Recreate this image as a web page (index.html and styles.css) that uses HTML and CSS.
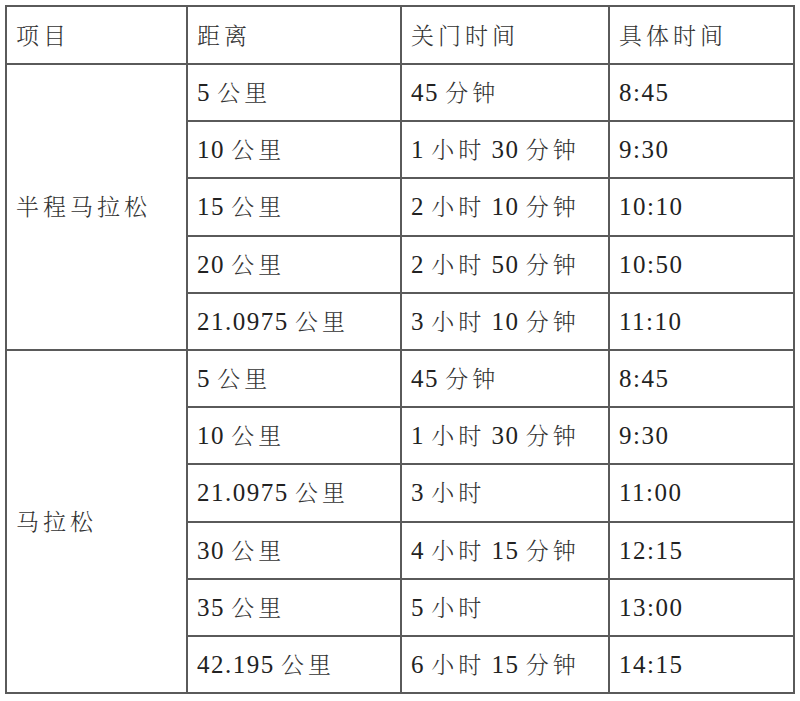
FILE: index.html
```html
<!DOCTYPE html>
<html>
<head>
<meta charset="utf-8">
<title>关门时间</title>
<link rel="stylesheet" href="styles.css">
</head>
<body>
<div class="page">
<table class="schedule">
  <colgroup>
    <col class="c1"><col class="c2"><col class="c3"><col class="c4">
  </colgroup>
  <thead>
    <tr class="head">
      <th><span class="zh">项目</span></th>
      <th><span class="zh">距离</span></th>
      <th><span class="zh">关门时间</span></th>
      <th><span class="zh">具体时间</span></th>
    </tr>
  </thead>
  <tbody>
    <tr>
      <td rowspan="5" class="event"><span class="zh">半程马拉松</span></td>
      <td><span class="num">5</span> <span class="zh">公里</span></td>
      <td><span class="num">45</span> <span class="zh">分钟</span></td>
      <td><span class="num">8:45</span></td>
    </tr>
    <tr>
      <td><span class="num">10</span> <span class="zh">公里</span></td>
      <td><span class="num">1</span> <span class="zh">小时</span> <span class="num">30</span> <span class="zh">分钟</span></td>
      <td><span class="num">9:30</span></td>
    </tr>
    <tr>
      <td><span class="num">15</span> <span class="zh">公里</span></td>
      <td><span class="num">2</span> <span class="zh">小时</span> <span class="num">10</span> <span class="zh">分钟</span></td>
      <td><span class="num">10:10</span></td>
    </tr>
    <tr>
      <td><span class="num">20</span> <span class="zh">公里</span></td>
      <td><span class="num">2</span> <span class="zh">小时</span> <span class="num">50</span> <span class="zh">分钟</span></td>
      <td><span class="num">10:50</span></td>
    </tr>
    <tr>
      <td><span class="num">21.0975</span> <span class="zh">公里</span></td>
      <td><span class="num">3</span> <span class="zh">小时</span> <span class="num">10</span> <span class="zh">分钟</span></td>
      <td><span class="num">11:10</span></td>
    </tr>
    <tr>
      <td rowspan="6" class="event"><span class="zh">马拉松</span></td>
      <td><span class="num">5</span> <span class="zh">公里</span></td>
      <td><span class="num">45</span> <span class="zh">分钟</span></td>
      <td><span class="num">8:45</span></td>
    </tr>
    <tr>
      <td><span class="num">10</span> <span class="zh">公里</span></td>
      <td><span class="num">1</span> <span class="zh">小时</span> <span class="num">30</span> <span class="zh">分钟</span></td>
      <td><span class="num">9:30</span></td>
    </tr>
    <tr>
      <td><span class="num">21.0975</span> <span class="zh">公里</span></td>
      <td><span class="num">3</span> <span class="zh">小时</span></td>
      <td><span class="num">11:00</span></td>
    </tr>
    <tr>
      <td><span class="num">30</span> <span class="zh">公里</span></td>
      <td><span class="num">4</span> <span class="zh">小时</span> <span class="num">15</span> <span class="zh">分钟</span></td>
      <td><span class="num">12:15</span></td>
    </tr>
    <tr>
      <td><span class="num">35</span> <span class="zh">公里</span></td>
      <td><span class="num">5</span> <span class="zh">小时</span></td>
      <td><span class="num">13:00</span></td>
    </tr>
    <tr>
      <td><span class="num">42.195</span> <span class="zh">公里</span></td>
      <td><span class="num">6</span> <span class="zh">小时</span> <span class="num">15</span> <span class="zh">分钟</span></td>
      <td><span class="num">14:15</span></td>
    </tr>
  </tbody>
</table>
</div>
</body>
</html>
```

FILE: styles.css
```css
html, body {
  margin: 0;
  padding: 0;
  background: #ffffff;
}

.page {
  padding: 5px;
}

.schedule {
  border-collapse: collapse;
  table-layout: fixed;
  width: 790px;
  font-family: "Liberation Serif", "Noto Serif", "Tinos", "FreeSerif", serif;
  font-size: 25px;
  color: #2a2a2a;
}

.c1 { width: 181px; }
.c2 { width: 214px; }
.c3 { width: 208px; }
.c4 { width: 185px; }

.schedule th,
.schedule td {
  border: 2px solid #5a5a5a;
  padding: 0 0 0 9px;
  text-align: left;
  vertical-align: middle;
  font-weight: normal;
  white-space: nowrap;
  line-height: 1;
}

.schedule tr.head {
  height: 58px;
}

.schedule tbody tr {
  height: 57.2px;
}

.num {
  font-family: "Liberation Serif", "Noto Serif", "Tinos", "FreeSerif", serif;
  font-size: 25px;
  letter-spacing: 1.5px;
  color: #222222;
}

.zh {
  font-family: "Noto Serif CJK SC", "Noto Sans CJK SC", sans-serif;
  font-weight: 300;
  font-size: 23px;
  letter-spacing: 4px;
  color: #333333;
}
```
